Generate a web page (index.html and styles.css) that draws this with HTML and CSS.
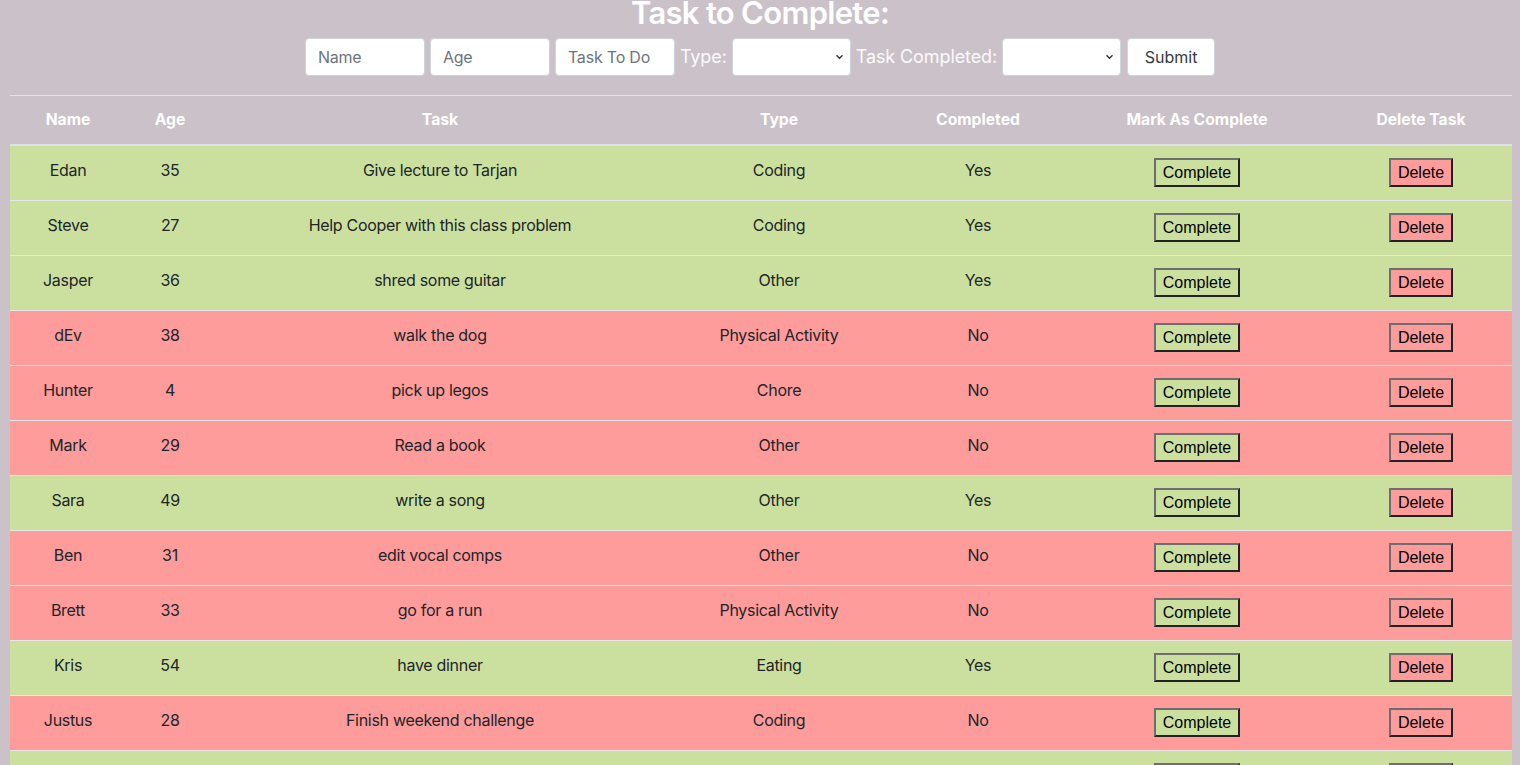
FILE: index.html
```html
<!DOCTYPE html>
<html lang="en">
<head>
<meta charset="utf-8">
<title>Task to Complete</title>
<link rel="stylesheet" href="styles.css">
</head>
<body>
<h1 class="title">Task to Complete:</h1>
<form class="task-form">
  <input class="field" type="text" placeholder="Name">
  <input class="field" type="text" placeholder="Age">
  <input class="field" type="text" placeholder="Task To Do">
  <label class="form-label">Type:</label>
  <select class="picker"><option></option></select>
  <label class="form-label">Task Completed:</label>
  <select class="picker"><option></option></select>
  <button class="submit" type="button">Submit</button>
</form>
<table class="tasks">
  <colgroup>
    <col class="c-name"><col class="c-age"><col class="c-task"><col class="c-type"><col class="c-done"><col class="c-mark"><col class="c-del">
  </colgroup>
  <thead>
    <tr><th>Name</th><th>Age</th><th>Task</th><th>Type</th><th>Completed</th><th>Mark As Complete</th><th>Delete Task</th></tr>
  </thead>
  <tbody>
    <tr class="yes"><td>Edan</td><td>35</td><td>Give lecture to Tarjan</td><td>Coding</td><td>Yes</td><td><button class="btn-complete">Complete</button></td><td><button class="btn-delete">Delete</button></td></tr>
    <tr class="yes"><td>Steve</td><td>27</td><td>Help Cooper with this class problem</td><td>Coding</td><td>Yes</td><td><button class="btn-complete">Complete</button></td><td><button class="btn-delete">Delete</button></td></tr>
    <tr class="yes"><td>Jasper</td><td>36</td><td>shred some guitar</td><td>Other</td><td>Yes</td><td><button class="btn-complete">Complete</button></td><td><button class="btn-delete">Delete</button></td></tr>
    <tr class="no"><td>dEv</td><td>38</td><td>walk the dog</td><td>Physical Activity</td><td>No</td><td><button class="btn-complete">Complete</button></td><td><button class="btn-delete">Delete</button></td></tr>
    <tr class="no"><td>Hunter</td><td>4</td><td>pick up legos</td><td>Chore</td><td>No</td><td><button class="btn-complete">Complete</button></td><td><button class="btn-delete">Delete</button></td></tr>
    <tr class="no"><td>Mark</td><td>29</td><td>Read a book</td><td>Other</td><td>No</td><td><button class="btn-complete">Complete</button></td><td><button class="btn-delete">Delete</button></td></tr>
    <tr class="yes"><td>Sara</td><td>49</td><td>write a song</td><td>Other</td><td>Yes</td><td><button class="btn-complete">Complete</button></td><td><button class="btn-delete">Delete</button></td></tr>
    <tr class="no"><td>Ben</td><td>31</td><td>edit vocal comps</td><td>Other</td><td>No</td><td><button class="btn-complete">Complete</button></td><td><button class="btn-delete">Delete</button></td></tr>
    <tr class="no"><td>Brett</td><td>33</td><td>go for a run</td><td>Physical Activity</td><td>No</td><td><button class="btn-complete">Complete</button></td><td><button class="btn-delete">Delete</button></td></tr>
    <tr class="yes"><td>Kris</td><td>54</td><td>have dinner</td><td>Eating</td><td>Yes</td><td><button class="btn-complete">Complete</button></td><td><button class="btn-delete">Delete</button></td></tr>
    <tr class="no"><td>Justus</td><td>28</td><td>Finish weekend challenge</td><td>Coding</td><td>No</td><td><button class="btn-complete">Complete</button></td><td><button class="btn-delete">Delete</button></td></tr>
    <tr class="yes"><td>Nora</td><td>22</td><td>water the plants</td><td>Chore</td><td>Yes</td><td><button class="btn-complete">Complete</button></td><td><button class="btn-delete">Delete</button></td></tr>
  </tbody>
</table>
</body>
</html>
```

FILE: styles.css
```css
html {
  scrollbar-width: none;
}
html::-webkit-scrollbar {
  display: none;
}
body {
  margin: 0;
  background: #cbc1c8;
  font-family: Inter, "Liberation Sans", sans-serif;
  color: #212529;
  font-size: 16px;
  line-height: 1.5;
}
.title {
  margin: -6px 0 0;
  text-align: center;
  color: #fff;
  font-size: 31px;
  font-weight: 600;
  line-height: 37px;
  letter-spacing: -0.7px;
}
.task-form {
  display: flex;
  justify-content: center;
  align-items: center;
  gap: 5px;
  margin: 7px 0 19px;
  height: 38px;
}
.field,
.picker,
.submit {
  box-sizing: border-box;
  height: 38px;
  border: 1px solid #ced4da;
  border-radius: 4px;
  background: #fff;
  font-family: inherit;
  font-size: 16px;
  color: #495057;
}
.field {
  width: 120px;
  padding: 6px 12px;
  letter-spacing: -0.2px;
}
.field::placeholder {
  color: #6c757d;
}
.picker {
  width: 119px;
  appearance: none;
  -webkit-appearance: none;
  background-image: url("data:image/svg+xml,%3Csvg xmlns='http://www.w3.org/2000/svg' width='10' height='7' viewBox='0 0 10 7'%3E%3Cpath d='M1.5 1.5 L5 5 L8.5 1.5' fill='none' stroke='%23333' stroke-width='1.6'/%3E%3C/svg%3E");
  background-repeat: no-repeat;
  background-position: right 6px center;
  background-size: 9px 6px;
}
.form-label {
  color: #fbfafb;
  font-size: 18px;
  line-height: 38px;
  letter-spacing: -0.1px;
}
.submit {
  width: 88px;
  margin-left: 1px;
  color: #343a40;
  padding: 0;
}
.tasks {
  margin-left: 10px;
  width: 1502px;
  border-collapse: collapse;
  table-layout: fixed;
}
.c-name { width: 116px; }
.c-age { width: 88px; }
.c-task { width: 452px; }
.c-type { width: 226px; }
.c-done { width: 172px; }
.c-mark { width: 266px; }
.c-del { width: 182px; }
.tasks th {
  color: #fff;
  font-weight: 700;
  font-size: 15.7px;
  padding: 12px;
  line-height: 24px;
  border-top: 1px solid #e4e2e4;
  border-bottom: 2px solid #dee2e6;
  text-align: center;
}
.tasks tbody tr {
  height: 55px;
}
.tasks td {
  padding: 12px;
  line-height: 24px;
  border-top: 1px solid #e6e6e9;
  text-align: center;
  vertical-align: top;
  letter-spacing: -0.3px;
}
.yes {
  background: #cbe09f;
}
.no {
  background: #fe9b9b;
}
.btn-complete,
.btn-delete {
  box-sizing: border-box;
  height: 29px;
  vertical-align: top;
  font-family: "Liberation Sans", Arial, sans-serif;
  font-size: 16px;
  line-height: 19px;
  padding: 3px 7px;
  border-width: 2px;
  border-style: solid;
  border-color: #6e6e6e #222 #222 #6e6e6e;
  color: #000;
  letter-spacing: 0;
}
.btn-complete {
  background: #cbe09f;
}
.btn-delete {
  background: #fe9b9b;
}
```
